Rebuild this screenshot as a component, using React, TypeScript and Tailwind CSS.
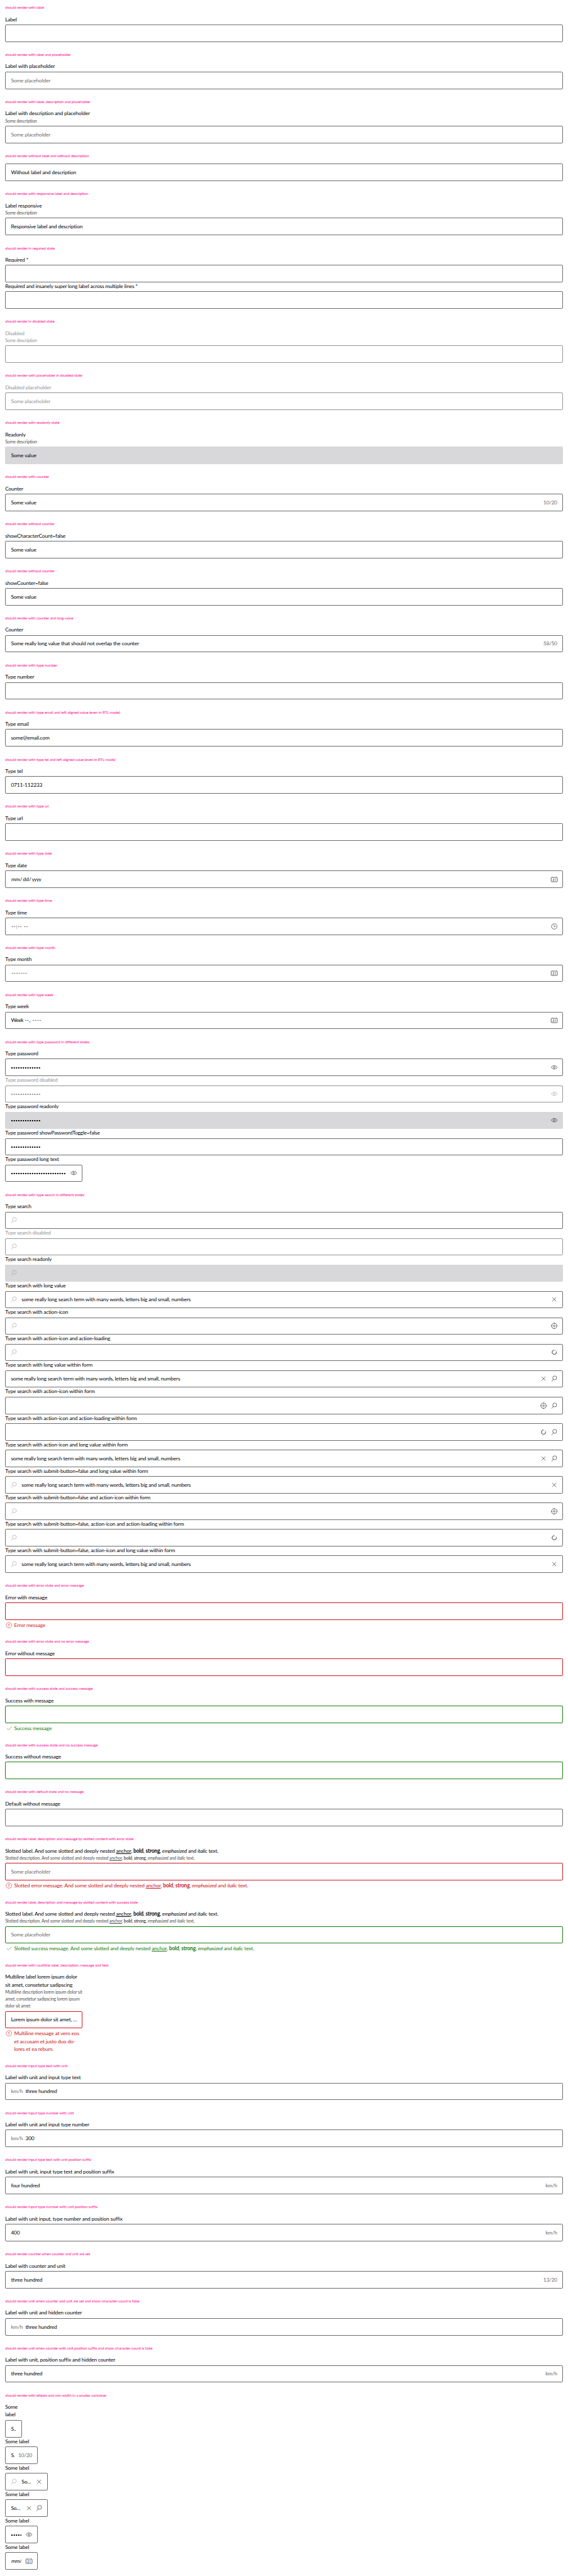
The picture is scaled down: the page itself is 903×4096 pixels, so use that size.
import type { ReactNode } from "react";

type State = "default" | "disabled" | "readonly" | "error" | "success";

const boxStyle: Record<State, string> = {
  default: "border-2 border-[#6b6d70] text-[#010205]",
  disabled: "border-2 border-[#949598] text-[#949598]",
  readonly: "border-2 border-[#d8d8db] bg-[#d8d8db] text-[#010205]",
  error: "border-2 border-[#cc1922] text-[#010205]",
  success: "border-2 border-[#197e10] text-[#010205]",
};

/* ---------- icons ---------- */

function Icon({ children, className = "" }: { children: ReactNode; className?: string }) {
  return (
    <svg
      viewBox="0 0 24 24"
      className={`size-6 shrink-0 fill-none stroke-current ${className}`}
      strokeWidth={1.1}
    >
      {children}
    </svg>
  );
}

const Search = ({ muted = false }: { muted?: boolean }) => (
  <Icon className={muted ? "text-[#949598]" : ""}>
    <circle cx="13.4" cy="9.7" r="6.1" />
    <path d="M9 14.1 3.9 20.7" />
  </Icon>
);

const Close = () => (
  <Icon>
    <path d="m6 6 12 12M18 6 6 18" />
  </Icon>
);

const Locate = () => (
  <Icon>
    <circle cx="12" cy="12" r="8" />
    <circle cx="12" cy="12" r="2.6" />
    <path d="M12 2.6v2M12 19.4v2M2.6 12h2M19.4 12h2" strokeWidth={1.8} />
  </Icon>
);

const Spinner = () => (
  <Icon>
    <circle cx="12" cy="12" r="6.6" className="opacity-30" />
    <path d="M18.4 10.4A6.6 6.6 0 1 1 12 5.4" strokeWidth={1.4} />
  </Icon>
);

const Eye = () => (
  <Icon>
    <path d="M2.6 12C5 8.4 8.3 6.6 12 6.6S19 8.4 21.4 12C19 15.6 15.7 17.4 12 17.4S5 15.6 2.6 12Z" />
    <circle cx="12" cy="12" r="2.6" />
  </Icon>
);

const Calendar = () => (
  <Icon>
    <path
      d="M4 6.2C2.9 6.2 2.5 6.8 2.5 7.8V18c0 1 .5 1.6 1.5 1.6h16c1 0 1.5-.6 1.5-1.6V7.8c0-1-.4-1.6-1.5-1.6M7.8 6.2h8.4"
      strokeWidth={1.2}
    />
    <path d="M6 4.3v3M18 4.3v3" strokeWidth={1.8} />
    <text
      x="12.2"
      y="16.8"
      textAnchor="middle"
      className="fill-[#404144] stroke-none font-['Roboto',sans-serif] text-[11px] tracking-normal"
    >
      31
    </text>
  </Icon>
);

const Clock = () => (
  <Icon>
    <circle cx="12" cy="12" r="8.4" />
    <path d="M11.5 7v5.5h4.500" />
  </Icon>
);

const ErrorIcon = () => (
  <Icon>
    <circle cx="12" cy="12" r="8.4" />
    <path d="M12 7.5v5.5M12 14.7v1.8" strokeWidth={1.8} />
  </Icon>
);

const CheckIcon = () => (
  <Icon>
    <path d="m5.6 12.4 4.6 4.3L20.2 7.7" />
  </Icon>
);

/* ---------- values ---------- */

function Dots({ count }: { count: number }) {
  return (
    <svg width={count * 7.1} height="4" className="mt-[3px] ml-[1.5px] shrink-0 fill-current">
      {Array.from({ length: count }, (_, i) => (
        <rect key={i} x={i * 7.1} y="0" width="3.9" height="4" />
      ))}
    </svg>
  );
}

const DateMask = () => (
  <span className="ml-px flex">
    <span className="w-[27px]">mm</span>
    <span className="w-[9.5px]">/</span>
    <span className="w-[18.5px]">dd</span>
    <span className="w-[9px]">/</span>
    <span className="tracking-[-1.4px]">yyyy</span>
  </span>
);

const Muted = ({ children }: { children: ReactNode }) => (
  <span className="text-[#6b6d70]">{children}</span>
);

const Rich = ({ lead }: { lead: string }) => (
  <>
    {lead} And some slotted and deeply nested <span className="underline">anchor</span>,{" "}
    <b>bold</b>, <strong>strong</strong>, <em>emphasized</em> and <i>italic</i> text.
  </>
);

/* ---------- field ---------- */

interface FieldProps {
  label?: ReactNode;
  description?: ReactNode;
  state?: State;
  message?: ReactNode;
  before?: ReactNode;
  unit?: string;
  value?: ReactNode;
  placeholder?: string;
  end?: string;
  actions?: ReactNode;
  width?: string;
}

function Field({
  label,
  description,
  state = "default",
  message,
  before,
  unit,
  value,
  placeholder,
  end,
  actions,
  width = "w-full",
}: FieldProps) {
  const disabled = state === "disabled";
  return (
    <div className={`flex flex-col ${width}`}>
      {label && (
        <div className={`whitespace-nowrap ${disabled ? "text-[#949598]" : ""}`}>{label}</div>
      )}
      {description && (
        <div
          className={`text-[13.8px] leading-[21.8px] tracking-[-0.36px] whitespace-nowrap ${
            disabled ? "text-[#949598]" : "text-[#535457]"
          }`}
        >
          {description}
        </div>
      )}
      <div
        className={`flex h-[54px] items-center rounded-[4px] px-4 ${boxStyle[state]} ${
          label ? "mt-1" : ""
        }`}
      >
        {before && <span className="mr-3 -ml-[3px]">{before}</span>}
        {unit && (
          <span className="mr-2 w-[37px]">
            <Muted>{unit}</Muted>
          </span>
        )}
        <span className="flex min-w-0 flex-1 items-center overflow-hidden whitespace-nowrap">
          {value}
          {placeholder && (
            <span className={disabled ? "" : "text-[#6b6d70]"}>{placeholder}</span>
          )}
        </span>
        {end && (
          <span className="ml-3 tracking-[-0.6px]">
            <Muted>{end}</Muted>
          </span>
        )}
        {actions && <span className="-mr-[3px] ml-3 flex gap-2">{actions}</span>}
      </div>
      {message && (
        <div
          className={`mt-1 flex items-start gap-1 ${
            state === "error" ? "text-[#cc1922]" : "text-[#197e10]"
          }`}
        >
          {state === "error" ? <ErrorIcon /> : <CheckIcon />}
          <div className="whitespace-nowrap">{message}</div>
        </div>
      )}
    </div>
  );
}

function Section({ title, children }: { title: string; children: ReactNode }) {
  return (
    <section className="flex flex-col p-4">
      <h2 className="mb-4 h-4 text-[12.3px] leading-4 tracking-[-0.37px] whitespace-nowrap text-[#ff1493]">
        {title}
      </h2>
      {children}
    </section>
  );
}

const LONG = "some really long search term with many words, letters big and small, numbers";

export default function App() {
  return (
    <main className="w-full bg-white font-['Lato',sans-serif] text-[16.4px] leading-6 tracking-[-0.37px] text-[#010205] [zoom:0.51296]">
      <Section title="should render with label">
        <Field label="Label" />
      </Section>
      <Section title="should render with label and placeholder">
        <Field label="Label with placeholder" placeholder="Some placeholder" />
      </Section>
      <Section title="should render with label, description and placeholder">
        <Field
          label="Label with description and placeholder"
          description="Some description"
          placeholder="Some placeholder"
        />
      </Section>
      <Section title="should render without label and without description">
        <Field value="Without label and description" />
      </Section>
      <Section title="should render with responsive label and description">
        <Field
          label="Label responsive"
          description="Some description"
          value="Responsive label and description"
        />
      </Section>
      <Section title="should render in required state">
        <Field label="Required *" />
        <Field label="Required and insanely super long label across multiple lines *" />
      </Section>
      <Section title="should render in disabled state">
        <Field label="Disabled" description="Some description" state="disabled" />
      </Section>
      <Section title="should render with placeholder in disabled state">
        <Field label="Disabled placeholder" placeholder="Some placeholder" state="disabled" />
      </Section>
      <Section title="should render with readonly state">
        <Field
          label="Readonly"
          description="Some description"
          value="Some value"
          state="readonly"
        />
      </Section>
      <Section title="should render with counter">
        <Field label="Counter" value="Some value" end="10/20" />
      </Section>
      <Section title="should render without counter">
        <Field label="showCharacterCount=false" value="Some value" />
      </Section>
      <Section title="should render without counter">
        <Field label="showCounter=false" value="Some value" />
      </Section>
      <Section title="should render with counter and long value">
        <Field
          label="Counter"
          value="Some really long value that should not overlap the counter"
          end="58/50"
        />
      </Section>
      <Section title="should render with type number">
        <Field label="Type number" />
      </Section>
      <Section title="should render with type email and left aligned value (even in RTL mode)">
        <Field label="Type email" value="some@email.com" />
      </Section>
      <Section title="should render with type tel and left aligned value (even in RTL mode)">
        <Field label="Type tel" value="0711-112233" />
      </Section>
      <Section title="should render with type url">
        <Field label="Type url" />
      </Section>
      <Section title="should render with type date">
        <Field label="Type date" value={<DateMask />} actions={<Calendar />} />
      </Section>
      <Section title="should render with type time">
        <Field
          label="Type time"
          value={<span className="ml-px tracking-[1px]">--:-- --</span>}
          actions={<Clock />}
        />
      </Section>
      <Section title="should render with type month">
        <Field
          label="Type month"
          value={<span className="ml-px tracking-[1.1px]">-------</span>}
          actions={<Calendar />}
        />
      </Section>
      <Section title="should render with type week">
        <Field
          label="Type week"
          value={
            <>
              <span className="w-[42.5px] tracking-[-0.9px]">Week</span>
              <span className="w-[24px] tracking-[1px]">--,</span>
              <span className="tracking-[1px]">----</span>
            </>
          }
          actions={<Calendar />}
        />
      </Section>
      <Section title="should render with type password in different states">
        <Field label="Type password" value={<Dots count={13} />} actions={<Eye />} />
        <Field
          label="Type password disabled"
          value={<Dots count={13} />}
          actions={<Eye />}
          state="disabled"
        />
        <Field
          label="Type password readonly"
          value={<Dots count={13} />}
          actions={<Eye />}
          state="readonly"
        />
        <Field label="Type password showPasswordToggle=false" value={<Dots count={13} />} />
        <Field
          label="Type password long text"
          value={<Dots count={30} />}
          actions={<Eye />}
          width="w-[240px]"
        />
      </Section>
      <Section title="should render with type search in different states">
        <Field label="Type search" before={<Search muted />} />
        <Field label="Type search disabled" before={<Search muted />} state="disabled" />
        <Field label="Type search readonly" before={<Search muted />} state="readonly" />
        <Field
          label="Type search with long value"
          before={<Search muted />}
          value={LONG}
          actions={<Close />}
        />
        <Field
          label="Type search with action-icon"
          before={<Search muted />}
          actions={<Locate />}
        />
        <Field
          label="Type search with action-icon and action-loading"
          before={<Search muted />}
          actions={<Spinner />}
        />
        <Field
          label="Type search with long value within form"
          value={LONG}
          actions={
            <>
              <Close />
              <Search />
            </>
          }
        />
        <Field
          label="Type search with action-icon within form"
          actions={
            <>
              <Locate />
              <Search />
            </>
          }
        />
        <Field
          label="Type search with action-icon and action-loading within form"
          actions={
            <>
              <Spinner />
              <Search />
            </>
          }
        />
        <Field
          label="Type search with action-icon and long value within form"
          value={LONG}
          actions={
            <>
              <Close />
              <Search />
            </>
          }
        />
        <Field
          label="Type search with submit-button=false and long value within form"
          before={<Search muted />}
          value={LONG}
          actions={<Close />}
        />
        <Field
          label="Type search with submit-button=false and action-icon within form"
          before={<Search muted />}
          actions={<Locate />}
        />
        <Field
          label="Type search with submit-button=false, action-icon and action-loading within form"
          before={<Search muted />}
          actions={<Spinner />}
        />
        <Field
          label="Type search with submit-button=false, action-icon and long value within form"
          before={<Search muted />}
          value={LONG}
          actions={<Close />}
        />
      </Section>
      <Section title="should render with error state and error message">
        <Field label="Error with message" state="error" message="Error message" />
      </Section>
      <Section title="should render with error state and no error message">
        <Field label="Error without message" state="error" />
      </Section>
      <Section title="should render with success state and success message">
        <Field label="Success with message" state="success" message="Success message" />
      </Section>
      <Section title="should render with success state and no success message">
        <Field label="Success without message" state="success" />
      </Section>
      <Section title="should render with default state and no message">
        <Field label="Default without message" />
      </Section>
      <Section title="should render label, description and message by slotted content with error state">
        <Field
          label={<Rich lead="Slotted label." />}
          description={<Rich lead="Slotted description." />}
          placeholder="Some placeholder"
          state="error"
          message={<Rich lead="Slotted error message." />}
        />
      </Section>
      <Section title="should render label, description and message by slotted content with success state">
        <Field
          label={<Rich lead="Slotted label." />}
          description={<Rich lead="Slotted description." />}
          placeholder="Some placeholder"
          state="success"
          message={<Rich lead="Slotted success message." />}
        />
      </Section>
      <Section title="should render with multiline label, description, message and text">
        <Field
          label={
            <>
              Multiline label lorem ipsum dolor
              <br />
              sit amet, consetetur sadipscing
            </>
          }
          description={
            <>
              Multiline description lorem ipsum dolor sit
              <br />
              amet, consetetur sadipscing lorem ipsum
              <br />
              dolor sit amet
            </>
          }
          value="Lorem ipsum dolor sit amet, …"
          state="error"
          message={
            <>
              Multiline message at vero eos
              <br />
              et accusam et justo duo do-
              <br />
              lores et ea rebum.
            </>
          }
          width="w-[240px]"
        />
      </Section>
      <Section title="should render input type text with unit">
        <Field label="Label with unit and input type text" unit="km/h" value="three hundred" />
      </Section>
      <Section title="should render input type number with unit">
        <Field label="Label with unit and input type number" unit="km/h" value="300" />
      </Section>
      <Section title="should render input type text with unit position suffix">
        <Field
          label="Label with unit, input type text and position suffix"
          value="four hundred"
          end="km/h"
        />
      </Section>
      <Section title="should render input type number with unit position suffix">
        <Field
          label="Label with unit input, type number and position suffix"
          value="400"
          end="km/h"
        />
      </Section>
      <Section title="should render counter when counter and unit are set">
        <Field label="Label with counter and unit" value="three hundred" end="13/20" />
      </Section>
      <Section title="should render unit when counter and unit are set and show-character-count is false">
        <Field label="Label with unit and hidden counter" unit="km/h" value="three hundred" />
      </Section>
      <Section title="should render unit when counter with unit position suffix and show-character-count is false">
        <Field
          label="Label with unit, position suffix and hidden counter"
          value="three hundred"
          end="km/h"
        />
      </Section>
      <Section title="should render with ellipsis and min-width in a smaller container">
        <Field
          label={
            <>
              Some
              <br />
              label
            </>
          }
          value="S.."
          width="w-[52px]"
        />
        <Field label="Some label" value="S." end="10/20" width="w-[101px]" />
        <Field
          label="Some label"
          before={<Search muted />}
          value="So…"
          actions={<Close />}
          width="w-[133px]"
        />
        <Field
          label="Some label"
          value="So…"
          actions={
            <>
              <Close />
              <Search />
            </>
          }
          width="w-[133px]"
        />
        <Field label="Some label" value={<Dots count={10} />} actions={<Eye />} width="w-[101px]" />
        <Field
          label="Some label"
          value={<span className="ml-px">mm/</span>}
          actions={<Calendar />}
          width="w-[101px]"
        />
      </Section>
    </main>
  );
}
